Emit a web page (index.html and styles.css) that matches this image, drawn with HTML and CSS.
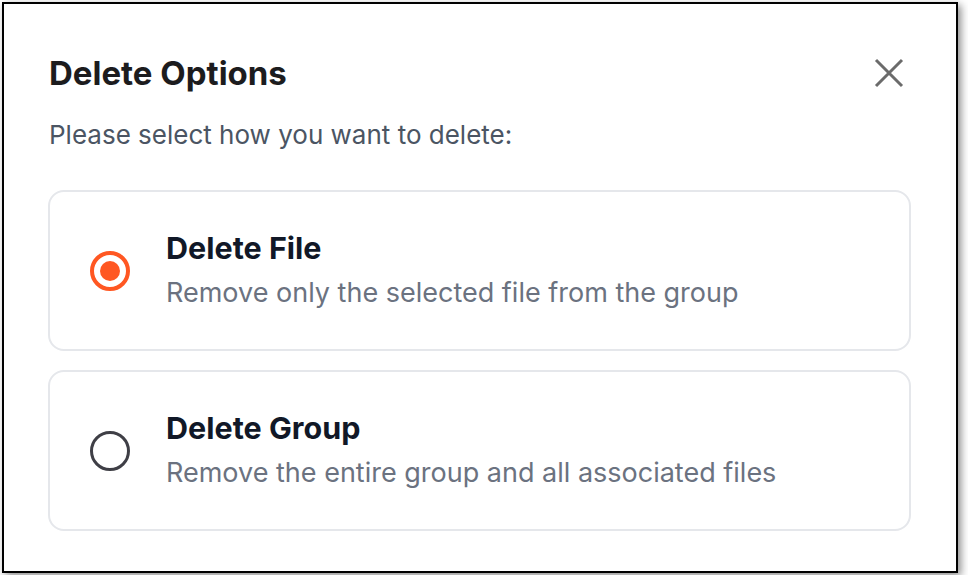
FILE: index.html
```html
<!DOCTYPE html>
<html lang="en">
<head>
  <meta charset="UTF-8" />
  <meta name="viewport" content="width=device-width, initial-scale=1.0"/>
  <title>Delete Options</title>
  <link rel="stylesheet" href="styles.css">
</head>
<body>

  <div class="dialog">
    <div class="dialog-header">
      <h1>Delete Options</h1>
      <button class="close" aria-label="Close">
        <svg width="30" height="30" viewBox="0 0 30 30">
          <path d="M2 2 L28 28 M28 2 L2 28" stroke="#6b6b6b" stroke-width="3" fill="none"/>
        </svg>
      </button>
    </div>

    <p class="hint">Please select how you want to delete:</p>

    <label class="option">
      <input type="radio" name="mode" value="file" checked>
      <span class="radio"></span>
      <span class="option-text">
        <span class="option-title">Delete File</span>
        <span class="option-desc">Remove only the selected file from the group</span>
      </span>
    </label>

    <label class="option">
      <input type="radio" name="mode" value="group">
      <span class="radio"></span>
      <span class="option-text">
        <span class="option-title">Delete Group</span>
        <span class="option-desc">Remove the entire group and all associated files</span>
      </span>
    </label>
  </div>

</body>
</html>
```

FILE: styles.css
```css
body {
  margin: 0;
  padding: 2px;
  background: #fff;
  font-family: Inter, Roboto, sans-serif;
}

.dialog {
  width: 956px;
  height: 571px;
  box-sizing: border-box;
  border: 2px solid #000;
  background: #fff;
  box-shadow: 3px 3px 8px rgba(0, 0, 0, 0.45);
  padding: 0 45px 0 44px;
}

.dialog-header {
  display: flex;
  justify-content: space-between;
  align-items: center;
  margin-top: 49px;
}

h1 {
  margin: 0 0 0 1px;
  font-size: 33px;
  line-height: 40px;
  font-weight: 700;
  color: #1c1c1e;
}

.close {
  border: none;
  background: none;
  padding: 0;
  margin-right: 7px;
  width: 30px;
  height: 30px;
  cursor: pointer;
}

.close svg {
  display: block;
}

.hint {
  margin: 26px 0 39px 1px;
  font-size: 26px;
  line-height: 32px;
  color: #4b5563;
}

.option {
  display: flex;
  align-items: center;
  height: 161px;
  box-sizing: border-box;
  border: 2px solid #e5e7eb;
  border-radius: 16px;
  padding-left: 40px;
  margin-bottom: 19px;
  cursor: pointer;
}

.option input {
  display: none;
}

.radio {
  width: 40px;
  height: 40px;
  box-sizing: border-box;
  border: 3px solid #3f3f46;
  border-radius: 50%;
  flex-shrink: 0;
  position: relative;
}

.option input:checked + .radio {
  border: 4px solid #ff5722;
}

.option input:checked + .radio::after {
  content: "";
  position: absolute;
  top: 6px;
  left: 6px;
  width: 20px;
  height: 20px;
  border-radius: 50%;
  background: #ff5722;
}

.option-text {
  display: flex;
  flex-direction: column;
  margin-left: 36px;
  margin-top: -3px;
}

.option-title {
  font-size: 30.5px;
  line-height: 38px;
  font-weight: 700;
  color: #111827;
}

.option-desc {
  margin-top: 10px;
  font-size: 27px;
  line-height: 32px;
  color: #6b7280;
}
```
